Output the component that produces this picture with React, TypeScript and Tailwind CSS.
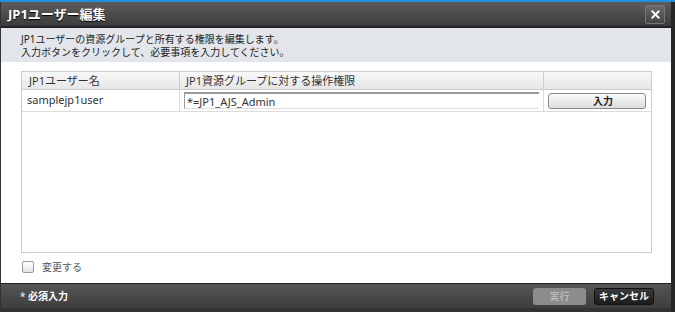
import { X } from "lucide-react";

const FONT = "font-['Noto_Sans','Noto_Sans_CJK_JP',sans-serif]";

export default function App() {
  return (
    <div className={`h-[312px] w-[675px] overflow-hidden bg-[#2e2e2e] ${FONT}`}>
      <div className="h-[2px] bg-[#1e90e0]" />
      <div className="flex h-[310px]">
        <div className="flex w-[671px] flex-col border-l border-[#333]">
          {/* Title bar */}
          <div className="flex h-[26px] items-center justify-between border-b-2 border-[#222] bg-gradient-to-b from-[#5c5c5c] to-[#3c3c3c] pl-[7px] pr-[6px]">
            <span className="text-[13px] font-bold leading-none text-white [text-shadow:0_1px_1px_#000]">
              JP1ユーザー編集
            </span>
            <button className="flex h-[19px] w-[20px] items-center justify-center rounded-[2px] border border-[#777] bg-gradient-to-b from-[#6a6a6a] to-[#444]">
              <X size={13} strokeWidth={3.5} className="text-white" />
            </button>
          </div>

          {/* Description */}
          <div className="flex h-[34px] flex-col justify-center gap-[1px] bg-[#e2e5e9] pl-[20px] text-[10px] leading-[12px] text-[#222]">
            <div>JP1ユーザーの資源グループと所有する権限を編集します。</div>
            <div>入力ボタンをクリックして、必要事項を入力してください。</div>
          </div>

          {/* Body */}
          <div className="flex flex-1 flex-col bg-white px-[20px] pt-[9px]">
            <div className="flex h-[182px] w-[631px] flex-col border border-[#c8cbd0]">
              <div className="flex h-[18px] border-b border-[#c8cbd0] bg-gradient-to-b from-[#f8f8f8] to-[#e6e6e6] text-[11px] leading-none text-[#333]">
                <div className="flex w-[158px] items-center border-r border-[#c8cbd0] pl-[7px]">JP1ユーザー名</div>
                <div className="flex w-[364px] items-center border-r border-[#c8cbd0] pl-[6px]">JP1資源グループに対する操作権限</div>
                <div className="flex-1" />
              </div>
              <div className="flex h-[22px] border-b border-[#dcdcdc] text-[11px] text-[#333]">
                <div className="flex w-[158px] items-center border-r border-[#dcdcdc] pl-[5px]">samplejp1user</div>
                <div className="flex w-[364px] items-center border-r border-[#dcdcdc] pl-[4px]">
                  <div className="flex h-[17px] w-[355px] items-center border-t-2 border-l border-[#9a9a9a] border-b border-b-[#e0e0e0] pl-[2px] leading-none">
                    *=JP1_AJS_Admin
                  </div>
                </div>
                <div className="flex flex-1 items-center pl-[4px]">
                  <button className="flex h-[16px] w-[98px] items-center justify-center rounded-[3px] border border-[#8a8a8a] bg-gradient-to-b from-[#fafafa] to-[#dedede] pl-[12px] text-[10px] font-bold leading-none text-[#222]">
                    入力
                  </button>
                </div>
              </div>
              <div className="flex-1" />
            </div>

            <div className="mt-[7px] flex items-center gap-[8px] pl-[1px]">
              <div className="h-[12px] w-[12px] rounded-[2px] border border-[#9a9a9a] bg-gradient-to-b from-white to-[#e4e4e4]" />
              <span className="text-[10px] leading-[14px] text-[#555]">変更する</span>
            </div>
          </div>

          {/* Footer */}
          <div className="flex h-[25px] items-center justify-between border-t border-[#222] bg-gradient-to-b from-[#555] to-[#3e3e3e] pl-[19px] pr-[17px]">
            <span className="text-[10px] font-bold leading-none text-white">
              <span className="text-[#c8d8ec]">*</span> 必須入力
            </span>
            <div className="flex gap-[8px]">
              <button className="flex h-[17px] w-[53px] items-center justify-center rounded-[3px] bg-[#8c8c8c] text-[10px] font-bold leading-none text-[#b8b8b8]">
                実行
              </button>
              <button className="flex h-[17px] w-[60px] items-center justify-center rounded-[3px] border border-[#111] bg-gradient-to-b from-[#3a3a3a] to-[#1c1c1c] text-[10px] font-bold leading-none text-white">
                キャンセル
              </button>
            </div>
          </div>
          <div className="h-[4px] bg-[#333]" />
        </div>
        <div className="flex-1 bg-[#262626]" />
      </div>
    </div>
  );
}
